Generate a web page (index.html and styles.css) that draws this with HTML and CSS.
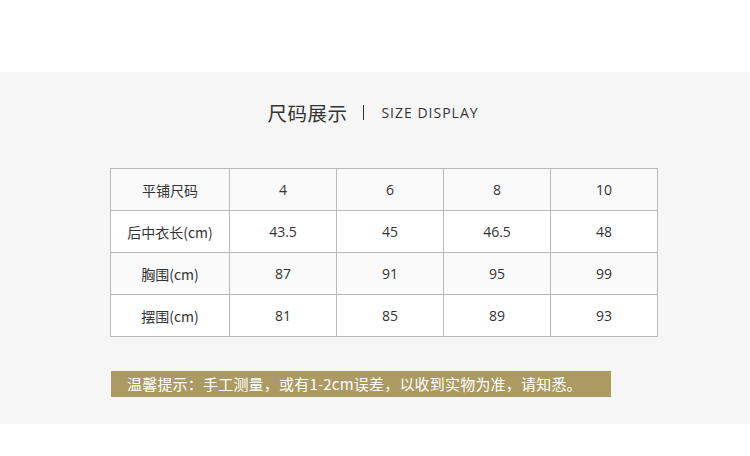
FILE: index.html
```html
<!DOCTYPE html>
<html lang="zh">
<head>
<meta charset="utf-8">
<link rel="stylesheet" href="styles.css">
</head>
<body>
<div class="top"></div>
<section class="panel">
  <h2 class="title"><span class="cn">尺码展示</span><span class="bar"></span><span class="en">SIZE DISPLAY</span></h2>
  <table class="size">
    <colgroup><col class="c0"><col><col><col><col></colgroup>
    <tr class="odd"><td>平铺尺码</td><td>4</td><td>6</td><td>8</td><td>10</td></tr>
    <tr><td>后中衣长(cm)</td><td>43.5</td><td>45</td><td>46.5</td><td>48</td></tr>
    <tr class="odd"><td>胸围(cm)</td><td>87</td><td>91</td><td>95</td><td>99</td></tr>
    <tr><td>摆围(cm)</td><td>81</td><td>85</td><td>89</td><td>93</td></tr>
  </table>
  <div class="note">温馨提示：手工测量，或有1-2cm误差，以收到实物为准，请知悉。</div>
</section>
</body>
</html>
```
FILE: styles.css
```css
html, body { margin: 0; padding: 0; background: #fff; }
body { width: 750px; height: 456px; font-family: "Noto Sans CJK SC", "Open Sans", sans-serif; color: #333; }
.top { height: 72px; }
.panel { height: 352px; background: #f6f6f6; box-sizing: border-box; padding-top: 25px; }
.title { margin: 0; display: flex; align-items: center; justify-content: center; height: 30px; font-weight: normal; padding-right: 4px; }
.cn { font-size: 19.5px; color: #333; letter-spacing: 0.5px; }
.bar { width: 1px; height: 15px; background: #333; margin: 0 17px 0 16px; }
.en { font-family: "Open Sans", "Noto Sans", sans-serif; font-size: 14px; letter-spacing: 1px; color: #333; }
.size { border-collapse: collapse; table-layout: fixed; width: 548px; margin: 41px 0 0 110px; }
.size col { width: 107px; }
.size col.c0 { width: 119px; }
.size td { border: 1px solid #b9b9b9; height: 41px; padding: 0; text-align: center; font-family: "Open Sans", "Noto Sans CJK SC", sans-serif; font-size: 14px; }
.size td:first-child { font-family: "Noto Sans CJK SC", sans-serif; font-size: 14px; }
.size tr { background: #fff; }
.size tr.odd { background: #fafafa; }
.note { margin: 34px 0 0 111px; width: 500px; height: 26px; background: #ab9a62; color: #fff; font-size: 15px; line-height: 26px; padding-left: 16px; box-sizing: border-box; letter-spacing: 0.2px; }
```
